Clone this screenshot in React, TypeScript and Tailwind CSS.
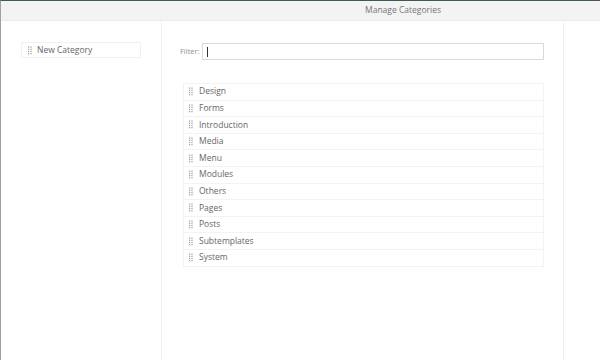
import React from 'react';

function Handle() {
  return (
    <svg width="4" height="9" viewBox="0 0 4 9" className="shrink-0">
      {[0.5, 2.7, 4.9, 7.1].map((y) => (
        <g key={y}>
          <rect x="0" y={y} width="1.2" height="1.2" fill="#9a9a9a" />
          <rect x="2.4" y={y} width="1.2" height="1.2" fill="#9a9a9a" />
        </g>
      ))}
    </svg>
  );
}

export default function App() {
  const categories = [
    'Design',
    'Forms',
    'Introduction',
    'Media',
    'Menu',
    'Modules',
    'Others',
    'Pages',
    'Posts',
    'Subtemplates',
    'System',
  ];

  return (
    <div
      className="w-[600px] h-[360px] flex flex-col bg-white border-t border-[#3f5a52] border-l border-l-[#a0a0a0] text-[#666] overflow-hidden"
      style={{ fontFamily: '"Open Sans", "Liberation Sans", sans-serif' }}
    >
      {/* Header */}
      <div className="h-[20px] shrink-0 bg-[#f3f3f3] border-b border-[#ececec] flex items-center">
        <div className="w-[161px]" />
        <div className="flex-1 text-center text-[8.5px] text-[#777] pl-[44px]">Manage Categories</div>
      </div>

      <div className="flex flex-1">
        {/* Left column */}
        <div className="w-[161px] shrink-0 border-r border-[#efefef] pt-[21px] pl-[20px]">
          <div className="w-[120px] h-[16px] border border-[#f0f0f0] flex items-center gap-[5px] pl-[6px] text-[8.5px] text-[#666]">
            <Handle />
            <span>New Category</span>
          </div>
        </div>

        {/* Center column */}
        <div className="w-[402px] shrink-0 border-r border-[#efefef] pt-[22px] pl-[18px] pr-[19px]">
          <div className="flex items-center gap-[2px]">
            <span className="text-[7.5px] text-[#8c939c]">Filter:</span>
            <div className="flex-1 h-[17px] border border-[#d9d9d9] flex items-center pl-[4px]">
              <div className="w-px h-[10px] bg-[#333]" />
            </div>
          </div>

          <div className="mt-[23px] ml-[3px] flex flex-col border-t border-[#f3f3f3]">
            {categories.map((c) => (
              <div
                key={c}
                className="h-[16.6px] border-x border-b border-[#f3f3f3] flex items-center gap-[6px] pl-[5px] text-[8.5px] text-[#666]"
              >
                <Handle />
                <span>{c}</span>
              </div>
            ))}
          </div>
        </div>

        {/* Right column */}
        <div className="flex-1" />
      </div>
    </div>
  );
}
